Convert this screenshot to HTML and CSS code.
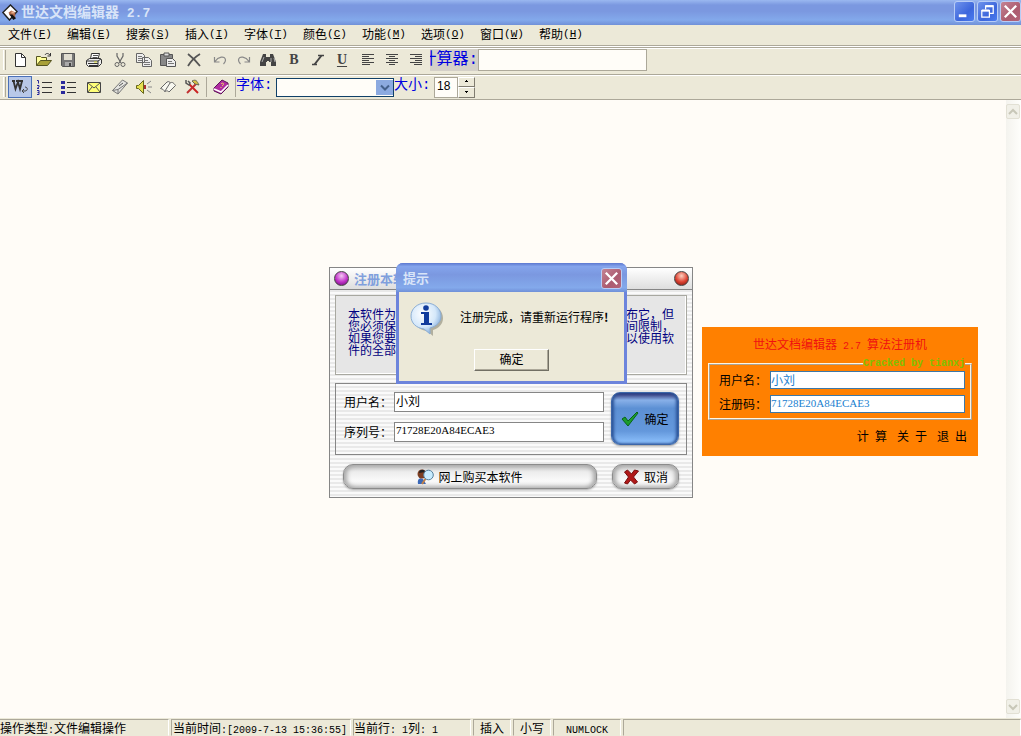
FILE: index.html
```html
<!DOCTYPE html>
<html lang="zh-CN">
<head>
<meta charset="utf-8">
<title>世达文档编辑器 2.7</title>
<link rel="stylesheet" href="styles.css">
</head>
<body>
<header class="titlebar">
  <svg class="app-icon" viewBox="0 0 18 18"><path d="M2 9 10 1l7 7-8 9z" fill="#fff" stroke="#222" stroke-width="1.5"/><path d="M8 9l3-2 4 2v5l-3-1-3-1z" fill="#b06a48"/><path d="M9 11h3l4 4-3 2z" fill="#111"/><path d="M11 8h3v2h-3z" fill="#e8b090"/></svg>
  <h1>世达文档编辑器<span class="title-ver"> 2.7</span></h1>
  <div class="win-buttons">
    <button class="win-btn" aria-label="最小化"><svg viewBox="0 0 20 20"><path d="M4 13h8v3H4z" fill="#fff"/></svg></button>
    <button class="win-btn" aria-label="还原"><svg viewBox="0 0 20 20"><path d="M8 8V4h8v8h-4M4 9h8v7H4z" fill="none" stroke="#fff" stroke-width="1.300"/><path d="M8 3.500h8v2H8zM4 8h8v2H4z" fill="#fff"/></svg></button>
    <button class="win-btn close" aria-label="关闭"><svg viewBox="0 0 20 20"><path d="M4 4l12 12M16 4 4 16" stroke="#fff" stroke-width="2.400"/></svg></button>
  </div>
</header>

<nav class="menubar">
  <button>文件<span class="m">(<u>F</u>)</span></button>
  <button>编辑<span class="m">(<u>E</u>)</span></button>
  <button>搜索<span class="m">(<u>S</u>)</span></button>
  <button>插入<span class="m">(<u>I</u>)</span></button>
  <button>字体<span class="m">(<u>T</u>)</span></button>
  <button>颜色<span class="m">(<u>C</u>)</span></button>
  <button>功能<span class="m">(<u>M</u>)</span></button>
  <button>选项<span class="m">(<u>O</u>)</span></button>
  <button>窗口<span class="m">(<u>W</u>)</span></button>
  <button>帮助<span class="m">(<u>H</u>)</span></button>
</nav>

<div class="toolbar first">
  <span class="grip"></span>
  <div class="groups">
    <div class="group">
      <button class="tool" aria-label="新建"><svg viewBox="0 0 16 16"><path d="M3.500 1.500h6l4 4v9h-10z" fill="#fff" stroke="#333"/><path d="M9.500 1.500v4h4" fill="none" stroke="#333"/></svg></button>
      <button class="tool" aria-label="打开"><svg viewBox="0 0 16 16"><path d="M.5 13.500v-9h4l1 1h5v3" fill="#ffff9c" stroke="#555522"/><path d="M.5 13.500l4-5h11l-4 5z" fill="#a8a038" stroke="#555522"/><path d="M9 3c1-2 3-2 5 0M14.500 1v3h-3" fill="none" stroke="#333"/></svg></button>
      <button class="tool" aria-label="保存"><svg viewBox="0 0 16 16"><path d="M1.500 1.500h13v13h-12l-1-1z" fill="#777" stroke="#555"/><path d="M4 2h8v6H4z" fill="#e0ddd0"/><path d="M5 10h7v4H5z" fill="#aaa"/><path d="M9 11h2v3H9z" fill="#444"/></svg></button>
    </div>
    <div class="group">
      <button class="tool" aria-label="打印"><svg viewBox="0 0 16 16"><path d="M4.500 7l1-5.500h8L12 7z" fill="#fff" stroke="#333"/><path d="M7 3.500h5M6.500 5.500h5" stroke="#555"/><path d="M.5 8.500l3-2h11l1 1v4l-3 3H2.500l-2-2z" fill="#eee" stroke="#333"/><path d="M1 9h11l3-2M2 11.500h10M12 9v5M3 13.500h9" fill="none" stroke="#333"/><path d="M8 9.500h3v1H8z" fill="#d9d628"/></svg></button>
    </div>
    <div class="group">
      <button class="tool" aria-label="剪切"><svg viewBox="0 0 16 16"><path d="M5 1v3l4 7M11 1v3l-4 7" fill="none" stroke="#666" stroke-width="1.200"/><circle cx="5" cy="12.500" r="2" fill="none" stroke="#666"/><circle cx="11" cy="12.500" r="2" fill="none" stroke="#666"/></svg></button>
      <button class="tool" aria-label="复制"><svg viewBox="0 0 16 16"><path d="M.5 1.500h6l2 2v7h-8zM6.500 5.500h6l3 3v6h-9z" fill="#eee" stroke="#666"/><path d="M2 4.500h4M2 6.500h4M2 8.500h4M8 8.500h4M8 10.500h6M8 12.500h6" stroke="#777"/></svg></button>
      <button class="tool" aria-label="粘贴"><svg viewBox="0 0 16 16"><path d="M.5 2.500h12v11H.5z" fill="#888" stroke="#555"/><path d="M4 1h5v3H4z" fill="#ddd" stroke="#555"/><path d="M6.500 6.500h6l3 3v5h-9z" fill="#eee" stroke="#555"/><path d="M8 9.500h4M8 11.500h6" stroke="#777"/></svg></button>
    </div>
    <div class="group">
      <button class="tool" aria-label="删除"><svg viewBox="0 0 16 16"><path d="M2 2c4 3 8 7 12 12M14 2C9 5 5 9 2 14" fill="none" stroke="#555" stroke-width="1.800"/></svg></button>
    </div>
    <div class="group">
      <button class="tool" aria-label="撤销"><svg viewBox="0 0 16 16"><path d="M2.500 5v5h5M3 9.500C6 5 13 3 13.500 8c0 2-1 3-2 4" fill="none" stroke="#888" stroke-width="1.200"/></svg></button>
      <button class="tool" aria-label="重做"><svg viewBox="0 0 16 16"><path d="M13.500 5v5h-5M13 9.500C10 5 3 3 2.500 8c0 2 1 3 2 4" fill="none" stroke="#888" stroke-width="1.200"/></svg></button>
      <button class="tool" aria-label="查找"><svg viewBox="0 0 16 16"><path d="M3 2h3v3h4V2h3l3 8v4h-5v-4H9V9H7v1H6v4H0v-4z" fill="#444"/><path d="M4 5 2 10M11 6v4M14 6l1 4" stroke="#aaa"/></svg></button>
    </div>
    <div class="group">
      <button class="tool letter" aria-label="粗体">B</button>
      <button class="tool" aria-label="斜体"><svg viewBox="0 0 16 16"><path d="M8 3.500h6M2 12.500h5" stroke="#444" stroke-width="1.500"/><path d="M11.500 3.500 4.500 12.500" stroke="#444" stroke-width="2"/></svg></button>
      <button class="tool letter underline" aria-label="下划线">U</button>
    </div>
    <div class="group">
      <button class="tool" aria-label="左对齐"><svg viewBox="0 0 16 16"><path d="M2 2.500h12M2 4.500h7M2 6.500h12M2 8.500h7M2 10.500h12M2 12.500h8" stroke="#444"/></svg></button>
      <button class="tool" aria-label="居中"><svg viewBox="0 0 16 16"><path d="M2 2.500h12M5 4.500h6M2 6.500h12M5 8.500h6M2 10.500h12M5 12.500h6" stroke="#444"/></svg></button>
      <button class="tool" aria-label="右对齐"><svg viewBox="0 0 16 16"><path d="M2 2.500h12M7 4.500h7M2 6.500h12M7 8.500h7M2 10.500h12M6 12.500h8" stroke="#444"/></svg></button>
    </div>
  </div>
  <label class="calc-label" for="calc"><span>计算器<span class="colon">:</span></span></label>
  <input class="calc" id="calc" type="text">
</div>

<div class="toolbar second">
  <span class="grip"></span>
  <div class="groups">
    <div class="group">
      <button class="tool active" aria-label="自动换行"><svg viewBox="0 0 16 16"><path d="M0 2h3M4 2h4M8 2h3M1.500 2l2 8L6 3l2 7 2-8" fill="none" stroke="#333" stroke-width="1.800"/><path d="M13 8c3 0 3 4 0 4h-3M12 10l-2 2 2 2" fill="none" stroke="#444"/></svg></button>
      <button class="tool" aria-label="编号"><svg viewBox="0 0 16 16"><path d="M6 3.500h10M6 8.500h10M6 13.500h10" stroke="#333"/><path d="M1 1.500h1.500v3M1 6.500h2v1.500l-2 1.500h2M1 11.500h2v4H1M1.500 13.500H3" fill="none" stroke="#2a2a9c"/></svg></button>
      <button class="tool" aria-label="项目符号"><svg viewBox="0 0 16 16"><path d="M7 3.500h9M7 8.500h9M7 13.500h9" stroke="#333"/><path d="M1 2h4v3H1zM1 7h4v3H1zM1 12h4v3H1z" fill="#2a2a9c"/></svg></button>
    </div>
    <div class="group">
      <button class="tool" aria-label="邮件"><svg viewBox="0 0 16 16"><path d="M1.500 3.500h13v10h-13z" fill="#ffff78" stroke="#444"/><path d="M2 4l6 5 6-5M2 13l4-5M14 13l-4-5" fill="none" stroke="#555"/></svg></button>
    </div>
    <div class="group">
      <button class="tool" aria-label="橡皮"><svg viewBox="0 0 16 16"><path d="M.5 11.500 10.500 1l5 3L6 15z" fill="#e4e4e0" stroke="#777"/><path d="M.5 11.500l5.500-1V15M6 10.500 15.500 4" fill="none" stroke="#777"/><path d="M7 7l4-3" stroke="#555"/></svg></button>
      <button class="tool" aria-label="声音"><svg viewBox="0 0 16 16"><path d="M.5 6.500h2l5-5v13l-5-5h-2z" fill="#e6e050" stroke="#66661c"/><path d="M9 6v4" stroke="#a33" stroke-width="2"/><path d="M11 5l4-3M12 8h4M11 11l4 3" stroke="#888"/></svg></button>
      <button class="tool" aria-label="打开书"><svg viewBox="0 0 16 16"><path d="M.5 9.500 7 3c2-1 3 0 3 1 2-1 3-1 5.500 2.500L9 13c-2-2-3-1-4 0-1-2-2-3-4.500-3.500zM10 4l-5 8" fill="#f8f8f0" stroke="#666"/></svg></button>
      <button class="tool" aria-label="工具"><svg viewBox="0 0 16 16"><path d="M5 5l9 9" stroke="#c22" stroke-width="2"/><path d="M12 5l-9 9" stroke="#c23030" stroke-width="2"/><path d="M2 1v3l3 2 1-2-2-2" fill="none" stroke="#555" stroke-width="1.500"/><path d="M8 2c4-2 5 0 7 4l-4-1z" fill="#d8c040" stroke="#665"/></svg></button>
    </div>
    <span class="rule"></span>
    <div class="group">
      <button class="tool" aria-label="帮助手册"><svg viewBox="0 0 16 16"><path d="M1 9 9 1l6 3v4l-7 7-7-3z" fill="#b02ca0" stroke="#5c1458"/><path d="M1 10l7 3 7-7" fill="none" stroke="#fff" stroke-width="1.500"/><path d="M8 5c2-2 4 0 1 2M8 8v1" fill="none" stroke="#f0e060"/></svg></button>
    </div>
    <span class="rule"></span>
  </div>
  <label class="blue-label" for="font">字体<span class="colon">:</span></label>
  <span class="combo"><select id="font"><option></option></select><svg viewBox="0 0 17 15"><path d="M0 0h17v15H0z" fill="#8caae0"/><path d="M5 5.500l4 4 4-4" fill="none" stroke="#44618c" stroke-width="2"/></svg></span>
  <label class="blue-label" for="size">大小<span class="colon">:</span></label>
  <input class="size" id="size" type="text" value="18">
  <span class="spin"><button aria-label="增大"><svg viewBox="0 0 5 3"><path d="M2 0h1v1h1v1H1V1h1z"/></svg></button><button aria-label="减小"><svg viewBox="0 0 5 3"><path d="M1 0h3v1H3v1H2V1H1z"/></svg></button></span>
</div>

<main class="workspace">
  <textarea aria-label="文档"></textarea>
  <div class="scroll">
    <button aria-label="向上滚动"><svg viewBox="0 0 12 12"><path d="M2 8l4-4 4 4" fill="none" stroke="#c8c7b8" stroke-width="2"/></svg></button>
    <button aria-label="向下滚动"><svg viewBox="0 0 12 12"><path d="M2 4l4 4 4-4" fill="none" stroke="#c8c7b8" stroke-width="2"/></svg></button>
  </div>

  <section class="register" aria-label="注册">
    <header class="reg-head"><i class="orb purple"></i><h2>注册本软</h2><i class="orb red"></i></header>
    <div class="reg-body">
      <div class="notice">
        <p>本软件为<br>您必须保<br>如果您要<br>件的全部</p>
        <p>布它，但<br>间限制，<br>以使用软</p>
      </div>
      <div class="reg-form">
        <div class="fields">
          <label for="user">用户名：</label><input id="user" type="text" value="小刘">
          <label for="serial">序列号：</label><input id="serial" class="serial" type="text" value="71728E20A84ECAE3">
        </div>
        <button class="blue-btn"><svg viewBox="0 0 18 16"><path d="M1 8l3-2 3 4 9-9 1 1-10 13z" fill="#1d9c2c" stroke="#08641a"/></svg>确定</button>
      </div>
      <div class="reg-actions">
        <button class="pill buy"><svg viewBox="0 0 17 16"><path d="M1 15c-1-5 2-7 5-5l3 5z" fill="#3a68b8"/><circle cx="5" cy="5" r="4.500" fill="#7c3e22"/><path d="M2 4c0-4 6-4 6-1" fill="#222"/><path d="M9 9l-4 6" stroke="#c08048" stroke-width="2"/><circle cx="11.500" cy="6" r="4.800" fill="#c8ecff" stroke="#557f9c"/></svg>网上购买本软件</button>
        <button class="pill cancel"><svg viewBox="0 0 16 16"><path d="M1 3l3-2 4 4 3-4 4 1-5 6 4 5-3 2-4-4-3 4-3-1 4-6z" fill="#b01818" stroke="#780c0c"/></svg>取消</button>
      </div>
    </div>
  </section>

  <section class="message" role="dialog" aria-label="提示">
    <header><h2>提示</h2><button class="win-btn close" aria-label="关闭"><svg viewBox="0 0 20 20"><path d="M4 4l12 12M16 4 4 16" stroke="#fff" stroke-width="2.400"/></svg></button></header>
    <div class="msg-body">
      <div class="msg-row">
        <svg class="info" viewBox="0 0 34 34"><defs><radialGradient id="bub" cx=".4" cy=".35" r=".7"><stop offset="0" stop-color="#fff"/><stop offset=".6" stop-color="#d5e8fa"/><stop offset="1" stop-color="#7aa6d8"/></radialGradient></defs><path d="M16 2C7 2 2 8 2 15c0 7 5 12 13 13l6 5v-6c6-2 10-6 10-12C31 8 25 2 16 2z" transform="translate(2 1)" fill="#8a8878" opacity=".6"/><path d="M16 1C7 1 1 7 1 14c0 7 5 12 13 13l6 5v-6c7-2 11-6 11-12C31 7 25 1 16 1z" fill="url(#bub)" stroke="#8caed4"/><circle cx="16" cy="6" r="2.800" fill="#123c9c"/><path d="M11 10h8v11h3v2H11v-2h3v-9h-3z" fill="#123c9c"/></svg>
        <p>注册完成，请重新运行程序<b>!</b></p>
      </div>
      <button class="classic">确定</button>
    </div>
  </section>

  <section class="keygen" aria-label="算法注册机">
    <h2>世达文档编辑器<span class="m"> 2.7 </span>算法注册机</h2>
    <fieldset>
      <legend>Cracked by tianxj</legend>
      <label for="kuser">用户名：</label><input id="kuser" type="text" value="小刘">
      <label for="kcode">注册码：</label><input id="kcode" class="serial" type="text" value="71728E20A84ECAE3">
    </fieldset>
    <div class="key-actions"><button>计<span class="m"> </span>算</button><button>关<span class="m"> </span>于</button><button>退<span class="m"> </span>出</button></div>
  </section>
</main>

<footer class="status">
  <span class="cell c-op">操作类型<span class="m">:</span>文件编辑操作</span>
  <span class="cell c-time">当前时间<span class="m">:[2009-7-13 15:36:55]</span></span>
  <span class="cell c-pos">当前行<span class="m">: 1</span>列<span class="m">: 1</span></span>
  <span class="cell c-key">插入</span>
  <span class="cell c-key">小写</span>
  <span class="cell c-num"><span class="m">NUMLOCK</span></span>
  <span class="cell c-rest"></span>
</footer>
</body>
</html>
```

FILE: styles.css
```css
* { box-sizing: border-box; }
html, body { height: 100%; }
body {
  margin: 0;
  display: flex;
  flex-direction: column;
  overflow: hidden;
  background: #ece9d8;
  color: #000;
  font: 12px/16px "Noto Sans CJK SC", sans-serif;
}
button, input, select, textarea { font: inherit; color: inherit; margin: 0; padding: 0; border-radius: 0; }
button { background: none; border: 0; white-space: nowrap; }
h1, h2, p { margin: 0; }
svg { display: block; flex: none; }
.m { font: 10px/16px "Liberation Mono", monospace; white-space: pre; }
.colon { font-family: "Liberation Mono", monospace; }

.titlebar {
  height: 25px;
  flex: none;
  display: flex;
  align-items: center;
  padding-left: 1px;
  background: linear-gradient(#9ab8f0, #7b98e0 20%, #7b98e0 45%, #83a9eb 80%, #7090d8);
}
.app-icon { width: 17px; height: 17px; margin-right: 3px; }
.titlebar h1 { flex: 1; font-size: 14px; line-height: 20px; font-weight: 700; color: #d8e4f8; }
.title-ver { font: bold 13px/20px "Liberation Mono", monospace; white-space: pre; }
.win-buttons { display: flex; gap: 2px; padding-bottom: 2px; }
.win-btn {
  width: 21px;
  height: 21px;
  border: 1px solid #b8cdf6;
  border-radius: 3px;
  background: linear-gradient(135deg, #6f93ec, #3c66dc 60%, #4a7cf0);
}
.win-btn.close { background: linear-gradient(135deg, #c48494, #ac5c70 60%, #b46478); }
.win-btn svg { width: 19px; height: 19px; }

.menubar { height: 20px; flex: none; display: flex; gap: 1px; }
.menubar button { width: 58px; padding: 0 6px 2px 8px; display: flex; align-items: center; }
.menubar .m { font-size: 11px; }
.menubar u { text-underline-offset: 1px; }

.toolbar {
  height: 27px;
  flex: none;
  display: flex;
  align-items: center;
  border-top: 1px solid #aca899;
  box-shadow: inset 0 1px #fff;
}
.toolbar.first { margin-top: 2px; padding-bottom: 2px; box-shadow: 0 -1px #fff, 0 -2px #aca899, inset 0 1px #fff; }
.toolbar.second { height: 26px; border-bottom: 1px solid #aca899; }
.grip { width: 3px; height: 20px; margin: 0 2px 0 3px; border-right: 1px solid #aca899; border-left: 1px solid #fff; }
.groups { display: flex; gap: 2px; }
.group { display: flex; }
.tool { width: 24px; height: 22px; display: flex; align-items: center; justify-content: center; }
.tool svg { width: 16px; height: 16px; }
.tool.active { background: #b8c8e8; border: 1px solid #4a70b8; }
.letter { font: bold 14px/16px "Liberation Serif", serif; color: #444; }
.underline { text-decoration: underline; text-underline-offset: 2px; }
.calc-label {
  width: 48px;
  height: 22px;
  margin-left: 2px;
  overflow: hidden;
  display: flex;
  justify-content: flex-end;
  background: #d4d0c8;
  color: #0000e0;
  font-size: 16px;
  line-height: 16px;
  white-space: nowrap;
}
.calc-label > span { flex: none; }
.calc { width: 169px; height: 22px; border: 1px solid #aca899; background: #fffdf8; }
.rule { width: 1px; height: 20px; align-self: center; background: #aca899; }
.blue-label { align-self: flex-start; width: 40px; color: #0000e0; font-size: 14px; line-height: 16px; white-space: nowrap; }
.combo { position: relative; width: 118px; height: 19px; }
.combo select { width: 100%; height: 100%; appearance: none; border: 1px solid #104068; background: #fffdf8; display: block; }
.combo svg { position: absolute; right: 1px; top: 2px; width: 17px; height: 15px; pointer-events: none; }
.size { width: 24px; height: 21px; padding: 0 0 3px 2px; border: 1px solid #aca899; background: #fffdf8; font: 12px/16px "Liberation Sans", sans-serif; }
.spin { display: flex; flex-direction: column; width: 17px; height: 21px; }
.spin button { flex: 1; display: flex; align-items: center; justify-content: center; border: 1px solid; border-color: #fff #807c70 #807c70 #fff; }
.spin svg { width: 5px; height: 3px; }

.workspace { position: relative; flex: 1; min-height: 0; display: flex; background: #fffcf7; }
.workspace > textarea { flex: 1; resize: none; border: 0; outline: 0; background: transparent; }
.scroll { width: 15px; padding: 4px 1px 4px 0; display: flex; flex-direction: column; justify-content: space-between; background: linear-gradient(90deg, #f4f3ee, #fefefb); }
.scroll button { width: 14px; height: 15px; display: flex; align-items: center; justify-content: center; border: 1px solid #e2e0d4; border-radius: 2px; background: #f1f0e8; }
.scroll svg { width: 12px; height: 12px; }

.register {
  position: absolute;
  left: 329px;
  top: 167px;
  width: 364px;
  border: 1px solid #868686;
  background: repeating-linear-gradient(#fafafa 0 2px, #e9e9e9 2px 4px);
}
.reg-head { height: 22px; display: flex; align-items: center; gap: 5px; padding: 0 3px 0 4px; border-bottom: 1px solid #868686; background: linear-gradient(#fff, #dedede); }
.reg-head h2 { flex: 1; font-size: 13px; line-height: 18px; color: #809fdd; }
.orb { width: 15px; height: 15px; border-radius: 50%; border: 1px solid #444; }
.purple { background: radial-gradient(circle at 50% 30%, #f4c8f4, #c030c8 55%, #601068); }
.red { background: radial-gradient(circle at 50% 30%, #ffd0c0, #dc4030 55%, #701810); }
.reg-body { padding: 5px; display: flex; flex-direction: column; gap: 8px; }
.notice {
  height: 80px;
  display: flex;
  justify-content: space-between;
  padding: 12px;
  border: 1px solid #a8a8a0;
  box-shadow: inset -1px -1px #fff;
  background: #e6e6e6;
  color: #000080;
  line-height: 12px;
}
.reg-form { display: flex; justify-content: space-between; height: 72px; padding: 8px 7px 9px 8px; border: 1px solid #868686; }
.fields { display: grid; grid-template-columns: 50px 210px; row-gap: 10px; align-content: start; align-items: center; }
.fields input { height: 20px; padding: 0 0 4px 1px; border: 1px solid #868686; background: #fff; }
.fields .serial, .keygen .serial { font: 11px/16px "Liberation Serif", serif; }
.blue-btn {
  width: 68px;
  height: 53px;
  display: flex;
  align-items: center;
  justify-content: center;
  gap: 5px;
  border: 1px solid #3c66a8;
  border-radius: 9px;
  background: linear-gradient(#28286c, #88b0e8 14%, #5c90d4 30%, #6498dc 75%, #90c4ff);
  box-shadow: inset 2px 0 3px #2c5498, inset -2px 0 3px #2c5498, 0 1px 2px #999;
}
.blue-btn svg { width: 18px; height: 16px; }
.reg-actions { display: flex; justify-content: space-between; padding: 1px 8px 3px; }
.pill {
  height: 25px;
  display: flex;
  align-items: center;
  justify-content: center;
  gap: 4px;
  border: 1px solid #8c8c8c;
  border-radius: 10px;
  background: linear-gradient(#bdbdbd, #ededed 30%, #fafafa 70%, #e0e0e0);
  box-shadow: inset 3px 0 4px #aaa, inset -3px 0 4px #aaa, 0 1px 2px #aaa;
}
.pill svg { width: 17px; height: 16px; }
.buy { width: 254px; }
.cancel { width: 67px; }

.message {
  position: absolute;
  left: 396px;
  top: 163px;
  width: 231px;
  border: 3px solid #6c84dc;
  border-top: 0;
  border-radius: 7px 7px 0 0;
  background: #6c84dc;
}
.message header { height: 29px; display: flex; align-items: center; justify-content: space-between; margin: 0 -3px; padding: 1px 5px 0 7px; border-radius: 7px 7px 0 0; background: linear-gradient(#5c78d0, #84a4ec 12%, #7b98e0 40%, #83a9eb 85%, #7090d8); }
.message h2 { font-size: 13px; line-height: 20px; color: #d8e4f8; }
.msg-body { height: 89px; display: flex; flex-direction: column; align-items: center; gap: 13px; padding-top: 10px; background: #ece9d8; }
.msg-row { align-self: stretch; display: flex; gap: 16px; padding-left: 11px; }
.msg-row p { margin-top: 7px; white-space: nowrap; }
.info { width: 34px; height: 34px; }
.classic { width: 75px; height: 22px; padding-bottom: 2px; border: 1px solid; border-color: #fff #716f64 #716f64 #fff; box-shadow: inset -1px -1px #aca899; background: #ece9d8; }

.keygen {
  position: absolute;
  left: 702px;
  top: 227px;
  width: 276px;
  padding: 8px 6px 9px;
  background: #ff8000;
}
.keygen h2 { font-size: 12px; line-height: 18px; font-weight: 400; text-align: center; color: #f01010; }
.keygen fieldset {
  min-width: 0;
  margin: 2px 0 8px;
  padding: 0 5px 5px 9px;
  border: 2px ridge #fff4e0;
  display: grid;
  grid-template-columns: 51px 1fr;
  row-gap: 6px;
  align-items: center;
}
.keygen legend { margin-left: auto; padding: 0; font: bold 10px/14px "Liberation Mono", monospace; color: #80c000; }
.keygen fieldset input { min-width: 0; height: 18px; padding-bottom: 2px; border: 1px solid #3c78a8; background: #fff; color: #2080d0; }
.key-actions { display: flex; justify-content: flex-end; gap: 10px; padding-right: 5px; }

.status { height: 18px; flex: none; display: flex; gap: 2px; border-top: 1px solid #ece9d8; background: #ece9d8; }
.cell { border: 1px solid; border-color: #aca899 #fff #ece9d8 #aca899; white-space: nowrap; overflow: hidden; line-height: 15px; }
.cell .m { line-height: 15px; }
.c-op { width: 169px; border-left: 0; }
.c-time { width: 180px; padding-left: 1px; }
.c-pos { width: 118px; }
.c-key { width: 38px; text-align: center; }
.c-num { width: 68px; text-align: center; }
.c-rest { flex: 1; }
```
